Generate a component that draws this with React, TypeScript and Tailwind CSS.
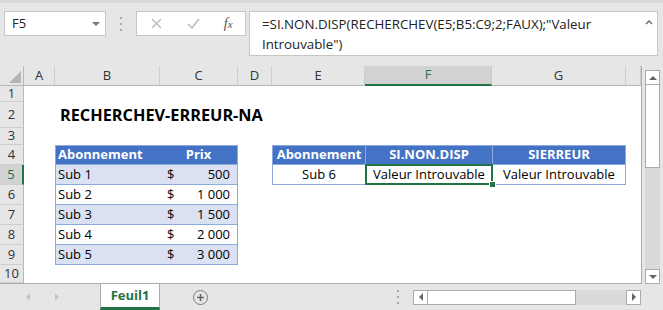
import React from "react";

const COLS = ["A", "B", "C", "D", "E", "F", "G", "H"];
const ROWS = [1, 2, 3, 4, 5, 6, 7, 8, 9, 10];
const PRICES: Record<number, string> = { 5: "500", 6: "1 000", 7: "1 500", 8: "2 000", 9: "3 000" };

function ColHeader({ c }: { c: string }) {
  if (c === "F") {
    return (
      <div className="bg-[#d2d2d2] border-r border-r-[#c8c8c8] border-b-2 border-b-[#217346] flex items-center justify-center text-[#217346] text-[13px]">
        F
      </div>
    );
  }
  return (
    <div className="bg-[#e6e6e6] border-r border-r-[#cdcdcd] border-b border-b-[#b8b8b8] flex items-center justify-center text-[#333] text-[13px]">
      {c === "H" ? "" : c}
    </div>
  );
}

function RowHeader({ n }: { n: number }) {
  if (n === 5) {
    return (
      <div className="bg-[#d2d2d2] border-b border-b-[#cdcdcd] border-r-2 border-r-[#217346] flex items-center justify-center text-[#217346] text-[13px]">
        5
      </div>
    );
  }
  return (
    <div className="bg-[#e6e6e6] border-b border-b-[#cdcdcd] border-r border-r-[#b8b8b8] flex items-center justify-center text-[#333] text-[13px]">
      {n}
    </div>
  );
}

function Cell({ r, c }: { r: number; c: string }) {
  if (r === 2 && c === "B") {
    return (
      <div className="relative flex items-center pl-[5px] overflow-visible whitespace-nowrap font-bold text-[16.3px] text-black">
        RECHERCHEV-ERREUR-NA
      </div>
    );
  }
  if (r === 4 && c === "B") {
    return (
      <div className="bg-[#4472c4] border-y border-l border-[#8ea9db] flex items-center pl-[2px] text-white font-bold text-[13px]">
        Abonnement
      </div>
    );
  }
  if (r === 4 && c === "C") {
    return (
      <div className="bg-[#4472c4] border-y border-r border-[#8ea9db] flex items-center justify-center text-white font-bold text-[13px]">
        Prix
      </div>
    );
  }
  if (r >= 5 && r <= 9 && c === "B") {
    const band = r % 2 === 1;
    return (
      <div
        className={
          band
            ? "bg-[#d9e1f2] border-b border-l border-[#8ea9db] flex items-center pl-[2px] text-black text-[13px]"
            : "bg-white border-b border-l border-[#8ea9db] flex items-center pl-[2px] text-black text-[13px]"
        }
      >
        Sub {r - 4}
      </div>
    );
  }
  if (r >= 5 && r <= 9 && c === "C") {
    const band = r % 2 === 1;
    return (
      <div
        className={
          band
            ? "bg-[#d9e1f2] border-b border-r border-[#8ea9db] flex items-center justify-between pl-[7px] pr-[7px] text-black text-[13px]"
            : "bg-white border-b border-r border-[#8ea9db] flex items-center justify-between pl-[7px] pr-[7px] text-black text-[13px]"
        }
      >
        <span>$</span>
        <span>{PRICES[r]}</span>
      </div>
    );
  }
  if (r === 4 && c === "E") {
    return (
      <div className="bg-[#4472c4] border-y border-l border-[#8ea9db] flex items-center justify-center text-white font-bold text-[13px]">
        Abonnement
      </div>
    );
  }
  if (r === 4 && c === "F") {
    return (
      <div className="bg-[#4472c4] border-y border-l border-[#8ea9db] flex items-center justify-center text-white font-bold text-[13px]">
        SI.NON.DISP
      </div>
    );
  }
  if (r === 4 && c === "G") {
    return (
      <div className="bg-[#4472c4] border-y border-x border-[#8ea9db] flex items-center justify-center text-white font-bold text-[13px]">
        SIERREUR
      </div>
    );
  }
  if (r === 5 && c === "E") {
    return (
      <div className="bg-white border-b border-l border-[#8ea9db] flex items-center justify-center text-black text-[13px]">
        Sub 6
      </div>
    );
  }
  if (r === 5 && c === "F") {
    return (
      <div className="relative bg-white border-b border-l border-[#8ea9db] flex items-center justify-center text-black text-[13px]">
        Valeur Introuvable
        <div className="absolute -left-[1px] -top-[1px] -right-[1px] -bottom-[1px] border-2 border-[#217346]" />
        <div className="absolute -right-[4px] -bottom-[4px] w-[7px] h-[7px] bg-[#217346] border border-white" />
      </div>
    );
  }
  if (r === 5 && c === "G") {
    return (
      <div className="bg-white border-b border-x border-[#8ea9db] flex items-center justify-center text-black text-[13px]">
        Valeur Introuvable
      </div>
    );
  }
  return <div />;
}

function Tri({ dir, color }: { dir: "up" | "down" | "left" | "right"; color: string }) {
  const pts =
    dir === "up"
      ? "0,5 4,1 8,5"
      : dir === "down"
      ? "0,1 8,1 4,5"
      : dir === "left"
      ? "5,0 5,8 1,4"
      : "1,0 1,8 5,4";
  const w = dir === "up" || dir === "down" ? 8 : 6;
  const h = dir === "up" || dir === "down" ? 6 : 8;
  return (
    <svg width={w} height={h} viewBox={`0 0 ${w} ${h}`}>
      <polygon points={pts} fill={color} />
    </svg>
  );
}

function VDots() {
  return (
    <div className="flex flex-col gap-[4px] items-center">
      <div className="w-[2px] h-[2px] bg-[#a8a8a8]" />
      <div className="w-[2px] h-[2px] bg-[#a8a8a8]" />
      <div className="w-[2px] h-[2px] bg-[#a8a8a8]" />
    </div>
  );
}

export default function App() {
  return (
    <div className="w-[663px] h-[310px] bg-[#e6e6e6] flex flex-col overflow-hidden font-['Open_Sans',sans-serif] text-[13px]">
      <div className="h-[66px] flex items-start pt-[11px] border-t-[3px] border-t-[#d9d9d9]">
        <div className="ml-[4px] w-[102px] h-[25px] bg-white border border-[#c6c6c6] flex items-center justify-between pl-[7px] pr-[5px] mt-[-3px]">
          <span className="text-[#222] text-[13px]">F5</span>
          <Tri dir="down" color="#777777" />
        </div>
        <div className="w-[30px] h-[25px] flex items-center justify-center mt-[-3px]">
          <VDots />
        </div>
        <div className="w-[110px] h-[25px] bg-white border border-[#c6c6c6] flex items-center mt-[-3px]">
          <div className="w-[38px] flex justify-center ml-[1px]">
            <svg width="11" height="11" viewBox="0 0 11 11">
              <path d="M1 1 L10 10 M10 1 L1 10" stroke="#b8b8b8" strokeWidth="1.4" />
            </svg>
          </div>
          <div className="w-[36px] flex justify-center">
            <svg width="13" height="11" viewBox="0 0 13 11">
              <path d="M1 6 L5 10 L12 1" stroke="#b8b8b8" strokeWidth="1.4" fill="none" />
            </svg>
          </div>
          <div className="w-[34px] flex justify-center">
            <span className="font-['Liberation_Serif',serif] italic text-[14px] text-[#555] leading-none">
              f<span className="text-[11px]">x</span>
            </span>
          </div>
        </div>
        <div className="ml-[3px] w-[409px] h-[45px] bg-white border border-[#c6c6c6] flex justify-between mt-[-3px]">
          <div className="pl-[12px] pt-[2px] leading-[20px] text-[13.3px] text-[#222] whitespace-nowrap">
            {'=SI.NON.DISP(RECHERCHEV(E5;B5:C9;2;FAUX);"Valeur'}
            <br />
            {'Introuvable")'}
          </div>
          <div className="pr-[4px] pt-[8px]">
            <svg width="8" height="5" viewBox="0 0 8 5">
              <path d="M1 4 L4 1 L7 4" stroke="#666" strokeWidth="1.4" fill="none" />
            </svg>
          </div>
        </div>
      </div>

      <div className="h-[218px] flex">
        <div className="w-[642px] h-[218px] bg-white border-r border-b border-[#ababab] grid grid-cols-[24px_31px_105px_78px_34px_93px_127px_134px_15px] grid-rows-[20px_16px_26px_17px_20px_20px_20px_20px_20px_20px_18px] overflow-hidden">
          <div className="bg-[#e6e6e6] border-r border-b border-[#b8b8b8] flex items-end justify-end pr-[2px] pb-[2px]">
            <svg width="12" height="12" viewBox="0 0 12 12">
              <polygon points="12,0 12,12 0,12" fill="#b4b4b4" />
            </svg>
          </div>
          {COLS.map((c) => (
            <ColHeader key={c} c={c} />
          ))}
          {ROWS.map((r) => (
            <React.Fragment key={r}>
              <RowHeader n={r} />
              {COLS.map((c) => (
                <Cell key={c} r={r} c={c} />
              ))}
            </React.Fragment>
          ))}
        </div>
        <div className="w-[21px] flex flex-col pl-[3px] pt-[4px]">
          <div className="w-[15px] h-[15px] bg-white border border-[#ababab] flex items-center justify-center">
            <Tri dir="up" color="#666666" />
          </div>
          <div className="w-[15px] h-[83px] bg-white border-x border-b border-[#ababab]" />
          <div className="w-[15px] flex-1 bg-[#dadada]" />
          <div className="w-[15px] h-[15px] bg-white border border-[#ababab] flex items-center justify-center">
            <Tri dir="down" color="#666666" />
          </div>
        </div>
      </div>

      <div className="h-[26px] flex items-center">
        <div className="w-[100px] h-full flex items-center">
          <div className="ml-[25px]">
            <Tri dir="left" color="#c4c4c4" />
          </div>
          <div className="ml-[23px]">
            <Tri dir="right" color="#c4c4c4" />
          </div>
        </div>
        <div className="w-[60px] h-full bg-white border-x border-[#ababab] border-b-[3px] border-b-[#217346] flex items-center justify-center text-[#217346] font-bold text-[13px]">
          Feuil1
        </div>
        <div className="ml-[33px] w-[15px] h-[15px] rounded-full border border-[#7a7a7a] flex items-center justify-center">
          <svg width="9" height="9" viewBox="0 0 9 9">
            <path d="M4.5 1 V8 M1 4.5 H8" stroke="#666" strokeWidth="1.6" />
          </svg>
        </div>
        <div className="w-[189px]" />
        <VDots />
        <div className="ml-[14px] w-[228px] h-[15px] flex">
          <div className="w-[15px] h-[15px] bg-white border border-[#ababab] flex items-center justify-center">
            <Tri dir="left" color="#666666" />
          </div>
          <div className="w-[148px] h-[15px] bg-white border-y border-r border-[#ababab]" />
          <div className="flex-1 h-[15px] bg-[#dadada]" />
          <div className="w-[15px] h-[15px] bg-white border border-[#ababab] flex items-center justify-center">
            <Tri dir="right" color="#666666" />
          </div>
        </div>
      </div>
    </div>
  );
}
